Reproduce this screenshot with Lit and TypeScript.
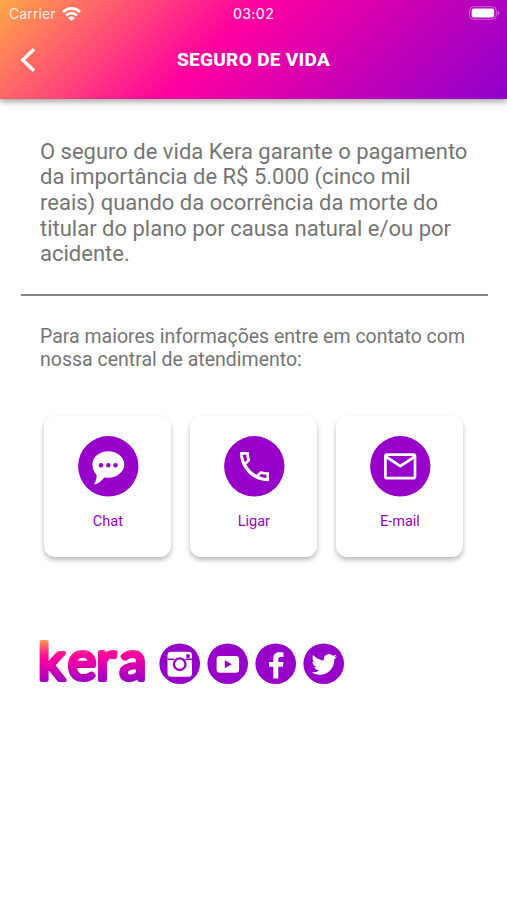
import { LitElement, html, svg, css } from "lit";
import { customElement } from "lit/decorators.js";

const chat = svg`<path fill="#fff" d="M30.300 15.200c8.800 0 16 5.800 16 13.100s-7.200 13.500-16 13.500c-1.500 0-2.800-.1-4-.4-2.600 3.400-5.500 5.800-9.300 7.100-.9.200-1.100-.6-.6-1.200 1.600-2.300 2.400-5 2.200-8.300-2.700-2.500-4.200-6.500-4.200-10.700 0-7.300 7.100-13.100 15.900-13.100z"/><g fill="#9600c8"><circle cx="23" cy="29.300" r="2.200"/><circle cx="30.300" cy="29.300" r="2.200"/><circle cx="37.500" cy="29.300" r="2.200"/></g>`;
const phone = svg`<path fill="none" stroke="#fff" stroke-width="2.700" d="M17.200 17.400h6.300c.1 2.300.5 4.600 1.200 6.800l-4 4.200M43.700 43.900v-6.300c-2.400 0-4.600-.4-6.800-1.100l-4.200 4M17.200 16.050c0 16 11.900 27.850 27.850 27.850M17.400 19c.4 3.700 1.500 6.800 3.300 9.600 2.800 5.200 6.800 9.200 12 11.800 3 1.700 6.300 2.800 9.800 3.200"/>`;
const mail = svg`<rect x="15.400" y="18.600" width="29.600" height="23.600" rx="1.800" fill="none" stroke="#fff" stroke-width="2.700"/><path d="M16 20.800l14.300 9.300 14.300-9.300" fill="none" stroke="#fff" stroke-width="2.800"/>`;

const actions = [
  { label: "Chat", icon: chat },
  { label: "Ligar", icon: phone },
  { label: "E-mail", icon: mail },
];

const instagram = svg`<rect x="8.500" y="8.700" width="24.500" height="25" rx="3.500" fill="#fff"/><path d="M8.500 16.300h6.500M26.500 16.300h6.500" stroke="#9600c8" stroke-width="1.500"/><circle cx="20.700" cy="21.200" r="5.800" fill="#fff" stroke="#9600c8" stroke-width="2.300"/><rect x="27.200" y="11.300" width="3.600" height="3.600" rx=".8" fill="#9600c8"/>`;
const youtube = svg`<rect x="9.600" y="13" width="22.500" height="16.700" rx="3.200" fill="#fff"/><path d="M17.800 17.300l7 3.900-7 4z" fill="#9600c8"/>`;
const facebook = svg`<path fill="#fff" d="M18.300 35.500V23.800h-4.200v-4.900h4.200v-3.300c0-4.500 2.500-6.300 6.300-6.300 1.700 0 2.900.1 3.900.2v4.500h-2.700c-1.800 0-2.500.9-2.500 2.200v2.700h5.200l-.7 4.900h-4.500v11.700z"/>`;
const twitter = svg`<path fill="#fff" transform="translate(8.500 8.700) scale(1.060)" d="M23.953 4.570a10 10 0 01-2.825.775 4.958 4.958 0 002.163-2.723c-.951.555-2.005.959-3.127 1.184a4.920 4.920 0 00-8.384 4.482C7.690 8.095 4.067 6.130 1.640 3.162a4.822 4.822 0 00-.666 2.475c0 1.710.870 3.213 2.188 4.096a4.904 4.904 0 01-2.228-.616v.060a4.923 4.923 0 003.946 4.827 4.996 4.996 0 01-2.212.085 4.936 4.936 0 004.604 3.417 9.867 9.867 0 01-6.102 2.105c-.390 0-.779-.023-1.170-.067a13.995 13.995 0 007.557 2.209c9.053 0 13.998-7.496 13.998-13.985 0-.210 0-.420-.015-.630A9.935 9.935 0 0024 4.590z"/>`;

@customElement("app-root")
export class AppRoot extends LitElement {
  static styles = css`
    :host {
      display: block;
      height: 900px;
      overflow: hidden;
      background: #fff;
      font-family: Roboto, sans-serif;
      color: #757575;
    }
    svg { display: block; }
    header {
      height: 98.500px;
      background: linear-gradient(135deg, #ffa646 0%, #ff009f 43%, #8e00cc 100%);
      box-shadow: 0 3px 6px rgba(0, 0, 0, 0.35);
      color: #fff;
    }
    .status {
      display: grid;
      grid-template-columns: 1fr auto 1fr;
      align-items: center;
      height: 27px;
      padding: 0 7px 0 9px;
      font: 14px/27px Inter, sans-serif;
    }
    .carrier { display: flex; align-items: center; gap: 6px; }
    .carrier-name { opacity: 0.85; letter-spacing: 0.100px; }
    .time { font-weight: 500; letter-spacing: 0.300px; opacity: 0.900; margin-right: 2px; }
    .battery { justify-self: end; margin-top: -1px; }
    .nav {
      display: grid;
      grid-template-columns: 40px 1fr 40px;
      align-items: center;
      height: 65px;
      padding: 0 16px;
    }
    h1 {
      margin: 0;
      font-size: 19px;
      font-weight: 800;
      letter-spacing: 0.300px;
      text-align: center;
      white-space: nowrap;
    }
    .intro {
      margin: 0;
      padding: 40px 0 0 40px;
      font-size: 22px;
      line-height: 25.700px;
      white-space: nowrap;
    }
    hr {
      margin: 27px 19px 0 21px;
      border: 0;
      height: 2px;
      background: #858585;
    }
    .info {
      margin: 0;
      padding: 29px 0 0 40px;
      font-size: 19.500px;
      line-height: 23.300px;
      white-space: nowrap;
    }
    .cards { display: flex; gap: 19px; padding: 44.400px 0 0 44.400px; }
    .card {
      display: flex;
      flex-direction: column;
      align-items: center;
      box-sizing: border-box;
      width: 127px;
      height: 141px;
      padding-top: 20px;
      border-radius: 11px;
      background: #fff;
      box-shadow: 0 3px 5px rgba(0, 0, 0, 0.270);
      color: #9600c8;
      font-size: 14.500px;
      line-height: 18px;
    }
    .card svg { margin-bottom: 16.500px; overflow: visible; }
    .brand { display: flex; align-items: flex-start; padding: 65px 0 0 34px; }
    .social { display: flex; gap: 6.500px; padding-top: 20.500px; margin-left: 4.700px; }
    .word { font-family: Lato, sans-serif; font-weight: 400; }
  `;

  render() {
    return html`
      <header>
        <div class="status">
          <div class="carrier">
            <span class="carrier-name">Carrier</span>
            <svg width="19" height="14" viewBox="0 0 19 14">
              <g fill="none" stroke="#fff" stroke-width="2.700">
                <path d="M1 5C6 .2 13 .2 18 5" />
                <path d="M4 8.600c3.100-3.200 7.900-3.200 11 0" />
              </g>
              <path fill="#fff" d="M6.200 10.900c1.800-1.800 4.800-1.800 6.600 0L9.500 14z" />
            </svg>
          </div>
          <span class="time">03:02</span>
          <svg class="battery" width="31" height="14" viewBox="0 0 31 14">
            <rect x=".7" y=".7" width="26.600" height="12.600" rx="4" fill="none" stroke="#fff" stroke-opacity=".4" />
            <rect x="2.700" y="2.600" width="22.500" height="8.800" rx="2" fill="#fff" />
            <path d="M28.700 4.700c2 .8 2 3.800 0 4.600z" fill="#fff" fill-opacity=".45" />
          </svg>
        </div>
        <div class="nav">
          <svg width="24" height="26" viewBox="0 0 24 26">
            <path d="M18 2.200L6.700 13 18 23.800" fill="none" stroke="#fff" stroke-width="3.300" />
          </svg>
          <h1>SEGURO DE VIDA</h1>
        </div>
      </header>
      <p class="intro">
        O seguro de vida Kera garante o pagamento<br />da importância de R$ 5.000 (cinco mil<br />reais) quando da ocorrência da morte do<br />titular do plano por causa natural e/ou por<br />acidente.
      </p>
      <hr />
      <p class="info">
        Para maiores informações entre em contato com<br />nossa central de atendimento:
      </p>
      <div class="cards">
        ${actions.map(
          (a) => html`<div class="card">
            <svg width="60.600" height="60.600" viewBox="0 0 60.600 60.600">
              <circle cx="30.300" cy="30.300" r="30.200" fill="#9600c8" />${a.icon}
            </svg>
            <span>${a.label}</span>
          </div>`
        )}
      </div>
      <div class="brand">
        <svg width="120" height="82" viewBox="0 0 120 82">
          <defs>
            <linearGradient id="g" gradientUnits="userSpaceOnUse" x1="5" y1="17" x2="7" y2="66">
              <stop offset="0" stop-color="#ffa646" />
              <stop offset=".25" stop-color="#ff2f86" />
              <stop offset=".4" stop-color="#ff009f" />
              <stop offset="1" stop-color="#8e00cc" />
            </linearGradient>
          </defs>
          <text class="word" y="58" font-size="54" fill="url(#g)" stroke="url(#g)" stroke-width="4.200" stroke-linejoin="round"><tspan x="4" font-size="53">k</tspan><tspan x="33.800 62.300 85.500">era</tspan></text>
        </svg>
        <div class="social">
          ${[instagram, youtube, facebook, twitter].map(
            (icon) => html`<svg width="41.500" height="41.500" viewBox="0 0 41.500 41.500">
              <circle cx="20.700" cy="20.700" r="20.300" fill="#9600c8" />${icon}
            </svg>`
          )}
        </div>
      </div>
    `;
  }
}
